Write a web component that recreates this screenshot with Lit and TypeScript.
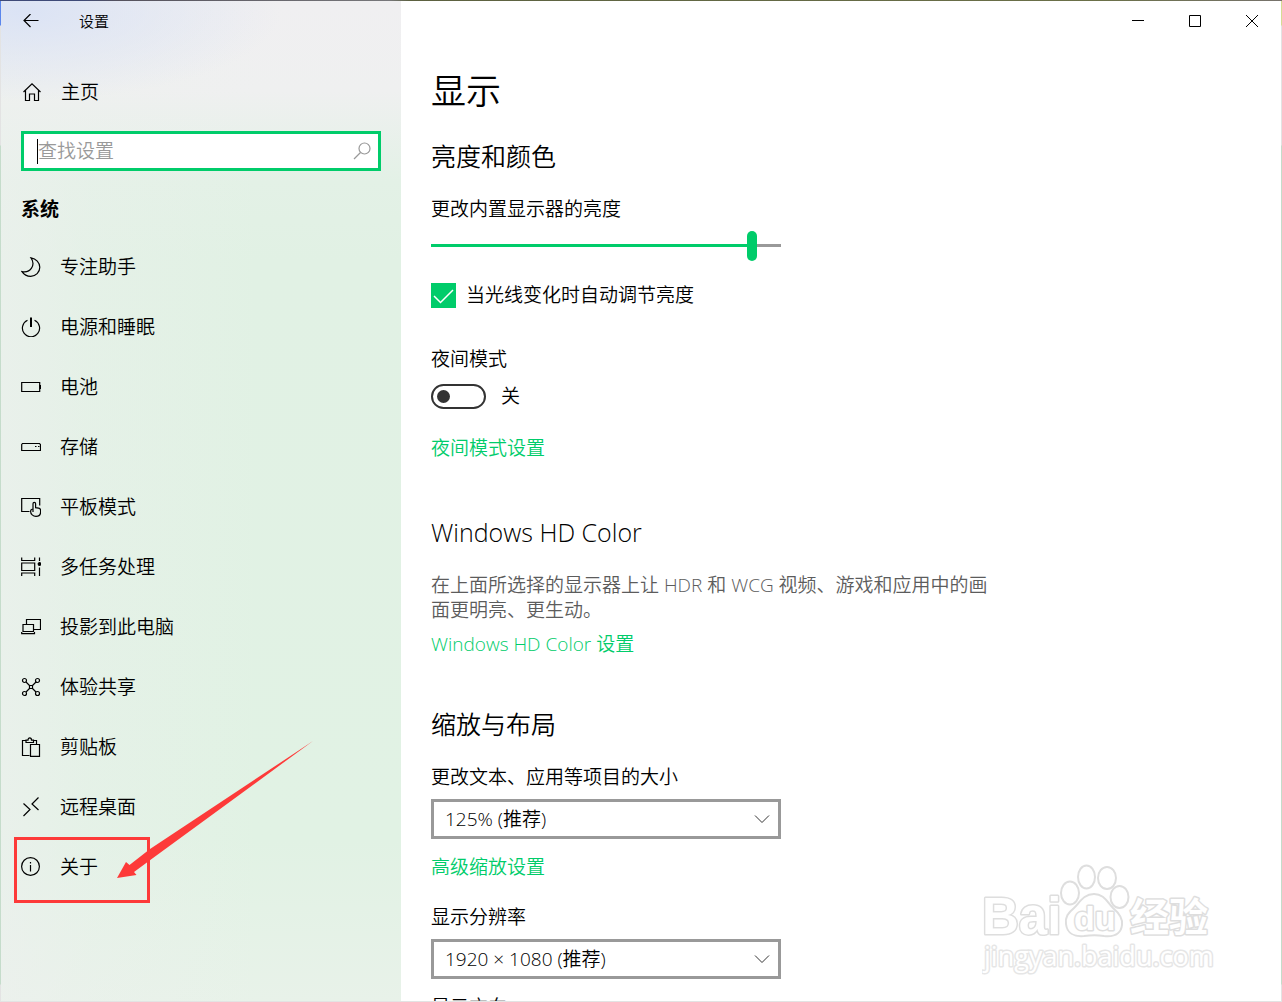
import { LitElement, html, css, svg } from "lit";
import { customElement, state } from "lit/decorators.js";
import { styleMap } from "lit/directives/style-map.js";

const icons = {
  home: svg`<path d="M1.5 10 10 1.800l8.500 8.200M3.500 8.500v10h4v-6.500h5v6.500h4v-10"/>`,
  moon: svg`<path d="M10 .8c5 .8 8.800 4.700 8.800 9.500 0 5-4 9-9 9-3.800 0-7-1.900-8.800-4.700 4 .7 7.600-.5 9.500-3.500 2.200-3.400 1.600-7.300-.5-10.300z"/>`,
  power: svg`<path d="M10 .5V10" stroke-width="2"/><path d="M6.500 3.300a8.600 8.600 0 1 0 7 0"/>`,
  battery: svg`<path d="M.7 5.500h18v9h-18z"/><path d="M19.500 8v4" stroke-width="2"/>`,
  storage: svg`<path d="M1.500 6.500h17l1 1v6H.7v-6z"/><path d="M14 9.500h1.500M17 9.500h1.500"/>`,
  tablet: svg`<path d="M8.500 14.500H.7v-13h18v7"/><path d="M12 15V6.800c0-2 2.600-2 2.600 0v3.900l3 .5c1.400.3 2 1 2 2.300v1.500c0 2.600-1.500 4.300-4.600 4.300-3 0-5.400-2.200-5.400-4.800 0-1.700 1-2.500 2.400-2.500"/>`,
  tasks: svg`<path d="M.7.500v3h13v-3M.7 19v-3h13v3M.7 6h13v7.500H.7zM18.500 .5V4M18.500 10.500V19"/><circle cx="18.500" cy="7" r="1.300" fill="currentColor"/>`,
  project: svg`<path d="M5.500 7.500v-5h14v10h-6.500M2 7.500h10.500v7H2zM.7 15v1.700h12.800V15"/>`,
  share: svg`<circle cx="3.500" cy="3.500" r="2"/><circle cx="16.500" cy="3.500" r="2"/><circle cx="3.500" cy="16.500" r="2"/><circle cx="16.500" cy="16.500" r="2"/><path d="M5 5l3.500 3.500M15 5l-3.500 3.500M5 15l3.500-3.500M15 15l-3.500-3.500M8.500 8.500h3v3h-3z"/>`,
  clipboard: svg`<path d="M8.500 18.500h-7v-15H5M12 3.500h3.500v3.500M5 5.500V3.200h2c0-3 3.500-3 3.500 0h2v2.300zM9.500 7.500h9v11.800h-9z"/>`,
  remote: svg`<path d="M2.500 6.500 9 12.500l-6.500 6.500M17.500.5 11 7l6.500 6"/>`,
  info: svg`<circle cx="9.500" cy="9.500" r="8.900"/><path d="M9.500 8v6.500M9.500 5v1.500"/>`,
  search: svg`<circle cx="12.500" cy="7.500" r="5.500"/><path d="M8.500 11.500 2 18"/>`,
};

type IconName = keyof typeof icons;

const icon = (name: IconName, size = 20) => html`
  <svg class="icon" width=${size} height=${size} viewBox="0 0 20 20" aria-hidden="true">${icons[name]}</svg>
`;

const navItems: { icon: IconName; label: string; marked?: boolean }[] = [
  { icon: "moon", label: "专注助手" },
  { icon: "power", label: "电源和睡眠" },
  { icon: "battery", label: "电池" },
  { icon: "storage", label: "存储" },
  { icon: "tablet", label: "平板模式" },
  { icon: "tasks", label: "多任务处理" },
  { icon: "project", label: "投影到此电脑" },
  { icon: "share", label: "体验共享" },
  { icon: "clipboard", label: "剪贴板" },
  { icon: "remote", label: "远程桌面" },
  { icon: "info", label: "关于", marked: true },
];

@customElement("app-root")
export class AppRoot extends LitElement {
  @state() private brightness = 93;
  @state() private nightMode = false;

  static styles = css`
    :host {
      display: block;
      --accent: #00cc6a;
      font-family: "Open Sans", "Noto Sans CJK SC", sans-serif;
      font-size: 19px;
      line-height: 25px;
      font-weight: 350;
      color: #000;
    }
    * {
      box-sizing: border-box;
    }
    h1, h2, p, ul {
      margin: 0;
      padding: 0;
      font-weight: inherit;
    }
    button, input, select {
      font: inherit;
      color: inherit;
      margin: 0;
    }
    a {
      text-decoration: none;
      color: inherit;
    }
    .window {
      position: relative;
      display: grid;
      grid-template-columns: 400px minmax(0, 1fr);
      grid-template-rows: minmax(0, 1fr);
      height: 100vh;
      padding: 1px;
      background:
        linear-gradient(90deg, #3e4a78 0 80px, #55525d 120px, #77777a 390px, #5c6140 410px, #6b7048 1100px, #77736c) top / 100% 1px no-repeat,
        linear-gradient(#5b86ec 0 25px, #e3e3e3 26px 145px, #c5dccb 146px 984px, #e3e3e3 985px) left / 1px 100% no-repeat,
        linear-gradient(#d5dc94 0 25px, #e3e3e3 26px 145px, #c5dccb 146px 984px, #e3e3e3 985px) right / 1px 100% no-repeat,
        #e3e3e3;
    }
    .sidebar {
      background:
        radial-gradient(ellipse 260px 90px at 20px 10px, #dbe3f5, #dbe3f500),
        linear-gradient(90deg, #edf0eeb0, #edf0ee50 90px, #edf0ee00 260px),
        linear-gradient(#f0eff1 0, #eff0f0 90px, #e3f1e6 180px, #e1f1e4 260px, #e1f2e4 840px, #e8f2e9 1000px);
    }
    .bar {
      display: flex;
      align-items: center;
      height: 40px;
      font-size: 15px;
    }
    .back, .caption {
      display: grid;
      place-items: center;
      height: 40px;
      padding: 0;
      border: 0;
      background: none;
    }
    .back {
      width: 60px;
      margin-right: 18px;
    }
    .caption {
      width: 57px;
    }
    .bar-main {
      justify-content: flex-end;
      padding-right: 1px;
    }
    .icon, .line {
      display: block;
      flex: none;
      fill: none;
      stroke: currentColor;
      stroke-width: 1.2;
    }
    .line {
      stroke-width: 1;
    }
    .home {
      display: flex;
      align-items: center;
      gap: 19px;
      height: 50px;
      margin-top: 26px;
      padding-left: 21px;
    }
    .search {
      display: flex;
      align-items: center;
      height: 40px;
      margin: 14px 20px 0;
      padding: 0 6px 0 13px;
      border: 3px solid var(--accent);
      background: #fff;
      color: #999;
    }
    .caret {
      width: 1px;
      height: 25px;
      background: #000;
    }
    .search-input {
      flex: 1;
      min-width: 0;
      padding: 0;
      border: 0;
      outline: 0;
      background: none;
    }
    .search-input::placeholder {
      color: #999;
      opacity: 1;
    }
    .group {
      margin: 26px 20px 15px;
      font-size: 19px;
      line-height: 25px;
      font-weight: 700;
    }
    .nav {
      list-style: none;
    }
    .item {
      position: relative;
    }
    .item-link {
      display: flex;
      align-items: center;
      gap: 19px;
      height: 60px;
      padding-left: 20px;
    }
    .mark-box {
      position: absolute;
      left: 13px;
      top: 0;
      width: 136px;
      height: 66px;
      border: 3px solid #fd3a39;
      pointer-events: none;
    }
    .mark-arrow {
      position: absolute;
      left: 116px;
      top: -96px;
      fill: #fd3a39;
      pointer-events: none;
    }
    .main {
      overflow: hidden;
      background: #fff;
    }
    .content {
      display: flex;
      flex-direction: column;
      align-items: flex-start;
      padding: 27px 30px 0;
    }
    .title {
      font-size: 35px;
      line-height: 46px;
      margin-bottom: 25px;
    }
    .heading {
      font-size: 25px;
      line-height: 34px;
      margin-bottom: 24px;
    }
    .section {
      display: flex;
      flex-direction: column;
      align-items: flex-start;
      width: 100%;
      margin-bottom: 50px;
    }
    .section-display {
      margin-bottom: 54px;
    }
    .link {
      color: var(--accent);
    }
    .slider {
      appearance: none;
      width: 350px;
      max-width: 100%;
      height: 30px;
      margin: 9px 0 22px;
      background: linear-gradient(90deg, var(--accent) var(--level), #999 var(--level)) 0 13px / 100% 3px no-repeat;
    }
    .slider::-webkit-slider-thumb {
      appearance: none;
      width: 10px;
      height: 30px;
      border-radius: 5px;
      background: var(--accent);
    }
    .check {
      display: flex;
      align-items: center;
      gap: 10px;
      margin-bottom: 39px;
    }
    .stack {
      display: grid;
      align-items: center;
    }
    .stack > * {
      grid-area: 1 / 1;
    }
    .stack > svg {
      pointer-events: none;
    }
    .box {
      appearance: none;
      width: 25px;
      height: 25px;
      border: 2px solid #333;
    }
    .box:checked {
      border-color: var(--accent);
      background: var(--accent);
    }
    .tick {
      color: #fff;
      stroke-width: 1.5;
    }
    .toggle-row {
      display: flex;
      align-items: center;
      gap: 15px;
      margin: 12px 0 27px;
    }
    .toggle {
      appearance: none;
      display: flex;
      align-items: center;
      width: 55px;
      height: 25px;
      padding: 0 4px;
      border: 2px solid #333;
      border-radius: 13px;
    }
    .toggle::before {
      content: "";
      width: 13px;
      height: 13px;
      border-radius: 50%;
      background: #333;
    }
    .toggle:checked {
      justify-content: flex-end;
      border-color: var(--accent);
      background: var(--accent);
    }
    .toggle:checked::before {
      background: #fff;
    }
    .note {
      max-width: 570px;
      margin-bottom: 9px;
      color: #5c5c5c;
    }
    .picker {
      width: 350px;
      max-width: 100%;
      margin: 9px 0 16px;
    }
    .select {
      appearance: none;
      width: 100%;
      height: 40px;
      padding: 0 36px 0 11px;
      border: 3px solid #999;
      border-radius: 0;
      background: #fff;
    }
    .chevron {
      justify-self: end;
      margin-right: 11px;
      color: #333;
    }
    .gap {
      margin-bottom: 25px;
    }
    .watermark {
      position: absolute;
      right: 64px;
      bottom: 22px;
      fill: #fff;
      stroke: #dedede;
      stroke-width: 2;
      pointer-events: none;
    }
    .wm-text {
      paint-order: stroke;
      stroke-width: 3;
      stroke-linejoin: round;
    }
    .wm-bai {
      font: 700 51px "Liberation Sans", sans-serif;
    }
    .wm-du {
      font: 700 34px "Liberation Sans", sans-serif;
    }
    .wm-cn {
      font: 700 39px "Noto Sans CJK SC", sans-serif;
    }
    .wm-url {
      font: 400 27px "Open Sans", sans-serif;
      stroke: #e6e6e6;
    }
  `;

  private renderPicker(id: string, label: string, value: string) {
    return html`
      <label for=${id}>${label}</label>
      <div class="picker stack">
        <select class="select" id=${id}><option>${value}</option></select>
        <svg class="line chevron" width="16" height="10" viewBox="0 0 16 10" aria-hidden="true"><path d="M1 1.500l7 7 7-7" /></svg>
      </div>
    `;
  }

  private renderSidebar() {
    return html`
      <aside class="sidebar">
        <header class="bar">
          <button class="back" aria-label="返回">
            <svg class="icon" width="16" height="14" viewBox="0 0 16 14"><path d="M15.500 6.500H1M7.500 0 1 6.500 7.500 13" /></svg>
          </button>
          <span>设置</span>
        </header>
        <a class="home" href="#home">${icon("home")}<span>主页</span></a>
        <label class="search">
          <span class="caret"></span>
          <input class="search-input" type="text" placeholder="查找设置" aria-label="查找设置" />
          ${icon("search")}
        </label>
        <h2 class="group">系统</h2>
        <ul class="nav">
          ${navItems.map(
            (item) => html`
              <li class="item">
                <a class="item-link" href="#${item.icon}">${icon(item.icon)}<span>${item.label}</span></a>
                ${item.marked
                  ? html`
                      <span class="mark-box"></span>
                      <svg class="mark-arrow" width="198" height="138" viewBox="0 0 198 138" aria-hidden="true">
                        <path d="M0 137 9 121l3.500 3L33 108 196 0 36 117 17 131l2.500 3z" />
                      </svg>
                    `
                  : null}
              </li>
            `
          )}
        </ul>
      </aside>
    `;
  }

  render() {
    const thumb = 10;
    const level = `calc(${thumb / 2}px + (100% - ${thumb}px) * ${this.brightness / 100})`;
    return html`
      <div class="window">
        ${this.renderSidebar()}
        <main class="main">
          <div class="bar bar-main">
            <button class="caption" aria-label="最小化">
              <svg class="line" width="12" height="12" viewBox="0 0 12 12"><path d="M0 5.500h12" /></svg>
            </button>
            <button class="caption" aria-label="最大化">
              <svg class="line" width="12" height="12" viewBox="0 0 12 12"><path d="M.5.500h11v11H.5z" /></svg>
            </button>
            <button class="caption" aria-label="关闭">
              <svg class="line" width="12" height="12" viewBox="0 0 12 12"><path d="M0 0l12 12M12 0 0 12" /></svg>
            </button>
          </div>
          <div class="content">
            <h1 class="title">显示</h1>
            <section class="section section-display">
              <h2 class="heading">亮度和颜色</h2>
              <label for="brightness">更改内置显示器的亮度</label>
              <input
                class="slider"
                id="brightness"
                type="range"
                min="0"
                max="100"
                .value=${String(this.brightness)}
                style=${styleMap({ "--level": level })}
                @input=${(e: Event) => (this.brightness = Number((e.target as HTMLInputElement).value))}
              />
              <label class="check">
                <span class="stack">
                  <input class="box" type="checkbox" checked />
                  <svg class="line tick" width="25" height="25" viewBox="0 0 25 25" aria-hidden="true"><path d="M3 13l6.500 6.500L22 7" /></svg>
                </span>
                当光线变化时自动调节亮度
              </label>
              <label for="night">夜间模式</label>
              <div class="toggle-row">
                <input
                  class="toggle"
                  id="night"
                  type="checkbox"
                  role="switch"
                  .checked=${this.nightMode}
                  @change=${(e: Event) => (this.nightMode = (e.target as HTMLInputElement).checked)}
                />
                <span>${this.nightMode ? "开" : "关"}</span>
              </div>
              <a class="link" href="#night">夜间模式设置</a>
            </section>
            <section class="section">
              <h2 class="heading">Windows HD Color</h2>
              <p class="note">在上面所选择的显示器上让 HDR 和 WCG 视频、游戏和应用中的画面更明亮、更生动。</p>
              <a class="link" href="#hd-color">Windows HD Color 设置</a>
            </section>
            <section class="section">
              <h2 class="heading">缩放与布局</h2>
              ${this.renderPicker("scale", "更改文本、应用等项目的大小", "125% (推荐)")}
              <a class="link gap" href="#scaling">高级缩放设置</a>
              ${this.renderPicker("resolution", "显示分辨率", "1920 × 1080 (推荐)")}
              <span>显示方向</span>
            </section>
          </div>
        </main>
        <svg class="watermark" width="236" height="120" viewBox="0 0 236 120" aria-hidden="true">
          <text class="wm-text wm-bai" x="0" y="74">Bai</text>
          <g>
            <ellipse cx="88" cy="33" rx="9" ry="11.500" />
            <ellipse cx="104.500" cy="17" rx="8.500" ry="11.500" />
            <ellipse cx="125" cy="18" rx="9" ry="11" />
            <ellipse cx="137.500" cy="37" rx="9" ry="11" />
            <path d="M112 34c-10 0-14 8-20 14-6 5-9 9-8 16 1 9 8 13 18 12 8-1 13-1 20 0 10 1 17-2 18-11 1-7-3-12-9-17-6-6-9-14-19-14z" />
          </g>
          <text class="wm-text wm-du" x="92" y="70">du</text>
          <text class="wm-text wm-cn" x="148" y="71">经验</text>
          <text class="wm-text wm-url" x="2" y="106">jingyan.baidu.com</text>
        </svg>
      </div>
    `;
  }
}
